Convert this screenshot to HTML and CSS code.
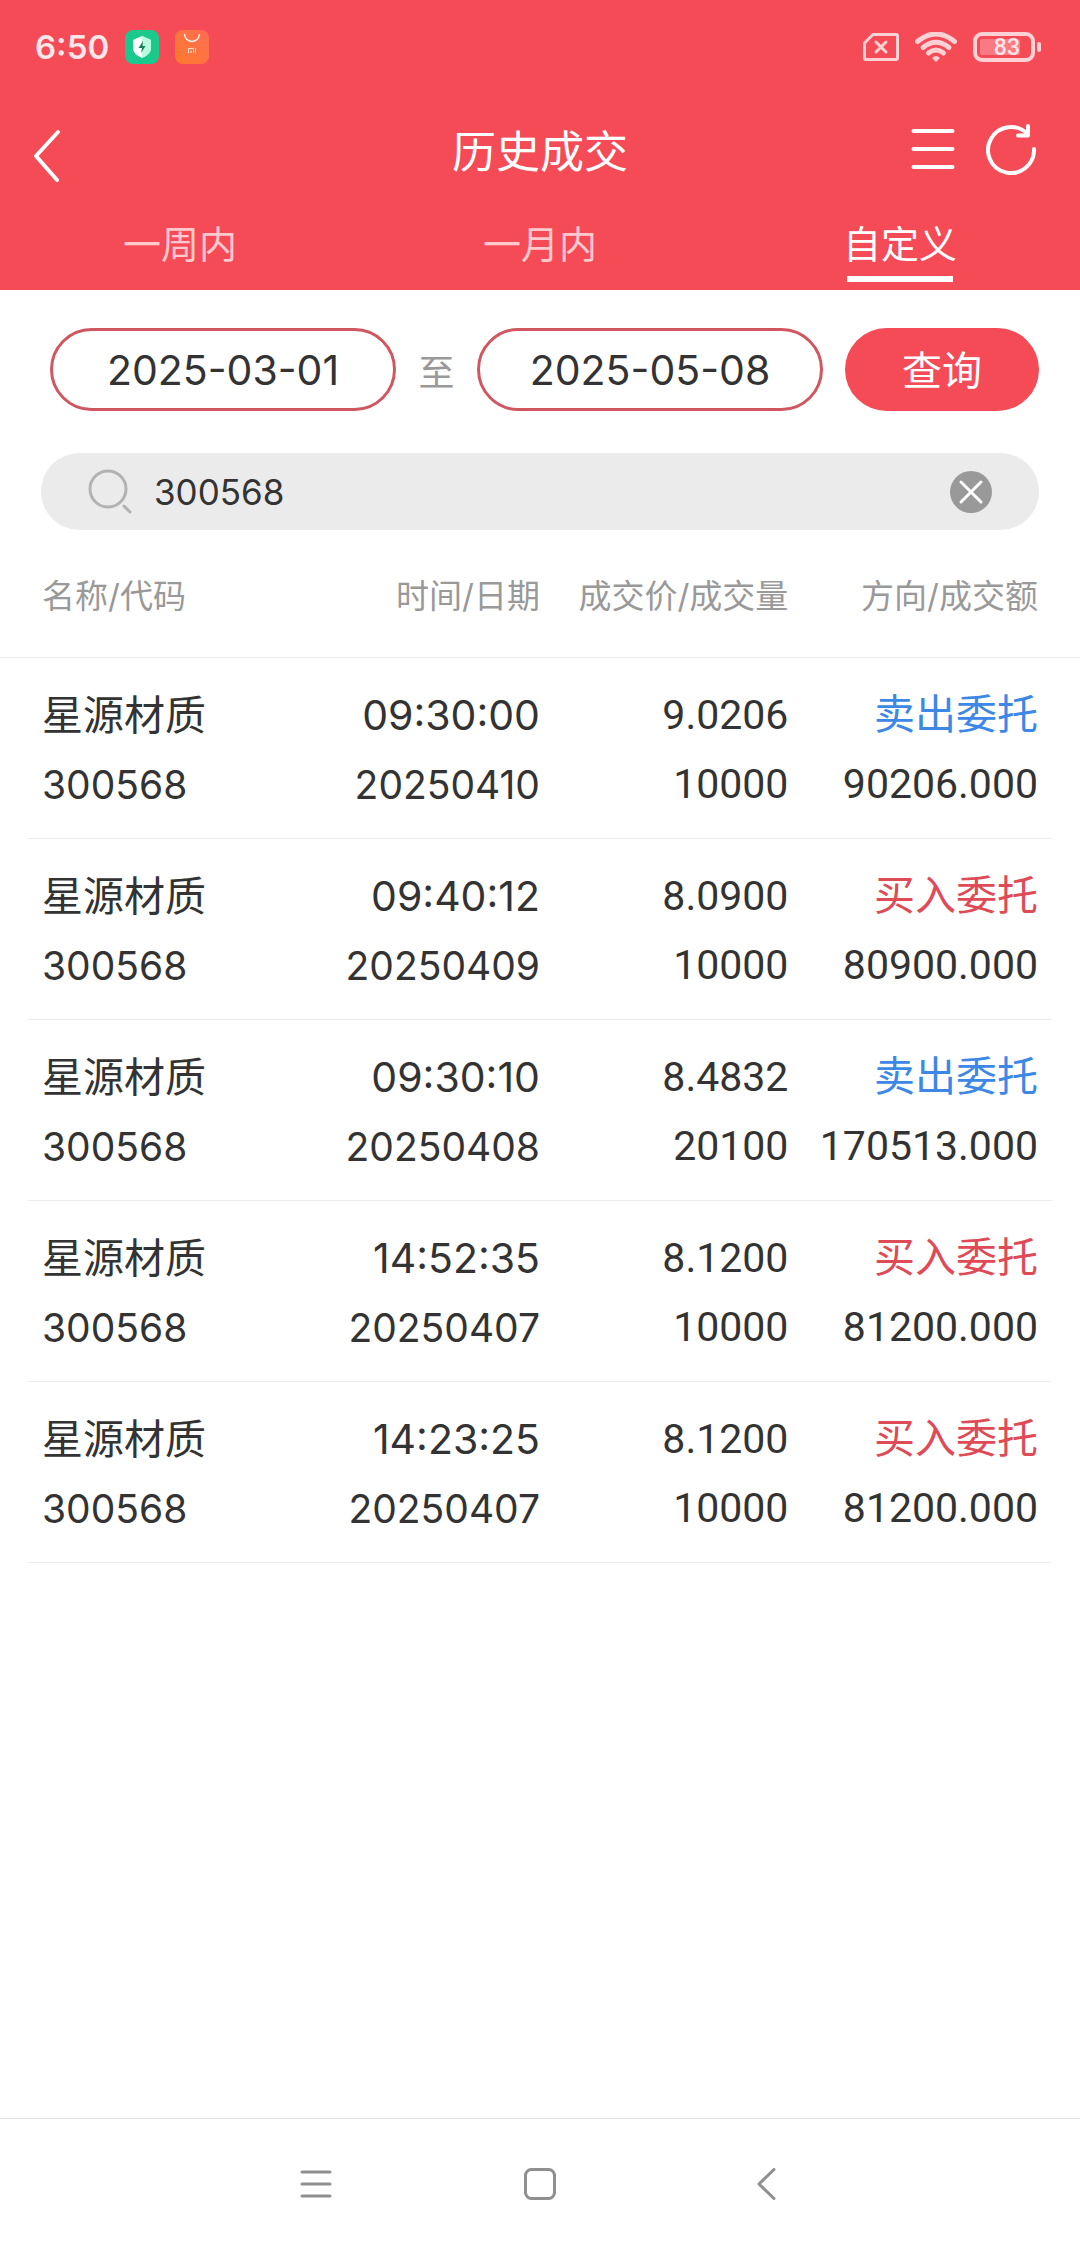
FILE: index.html
```html
<!DOCTYPE html>
<html lang="zh-CN">
<head>
  <meta charset="UTF-8">
  <meta name="viewport" content="width=device-width, initial-scale=1.0">
  <title>历史成交</title>
  <link rel="stylesheet" href="styles.css">
</head>
<body>

<header class="header">
  <div class="status-bar">
    <div class="status-left">
      <span class="clock">6:50</span>
      <svg class="app-icon" viewBox="0 0 34 34">
        <rect width="34" height="34" rx="8" fill="#1cc98c"/>
        <path d="M17 6 L26 10 V18 Q26 24 17 28 Q8 24 8 18 V10 Z" fill="#fff"/>
        <path d="M17 6 L26 10 V18 Q26 24 17 28 Z" fill="#b9fbe0"/>
        <path d="M18 11 L13.500 18 H17 L16 23 L20.500 16 H17.500 Z" fill="#14805a"/>
      </svg>
      <svg class="app-icon" viewBox="0 0 34 34">
        <defs>
          <linearGradient id="store" x1="0" y1="1" x2="1" y2="0">
            <stop offset="0" stop-color="#ff7a2c"/>
            <stop offset="1" stop-color="#ff6d55"/>
          </linearGradient>
        </defs>
        <rect width="34" height="34" rx="8" fill="url(#store)"/>
        <path d="M9.500 4 A7.500 7.500 0 0 0 24.500 4" fill="none" stroke="#fff" stroke-width="1.300"/>
        <path d="M13.500 23 V18.500 H18.500 V23 M16 20.500 V23 M20.500 18 V23" fill="none" stroke="#ffe3d6" stroke-width="1"/>
      </svg>
    </div>
    <div class="status-right">
      <svg class="sim" viewBox="0 0 36 28">
        <path d="M10 1.500 H33 Q34.500 1.500 34.500 3 V25 Q34.500 26.500 33 26.500 H3 Q1.500 26.500 1.500 25 V10 Z"/>
        <path d="M13 9 L23 19 M23 9 L13 19"/>
      </svg>
      <svg class="wifi" viewBox="0 0 42 30">
        <path d="M2.500 9.500 Q21 -5.500 39.500 9.500"/>
        <path d="M8 15.500 Q21 5 34 15.500"/>
        <path d="M13.500 21 Q21 15 28.500 21"/>
        <path class="wifi-dot" d="M17 26 Q21 22 25 26 L21 30 Z"/>
      </svg>
      <div class="battery"><span class="battery-level">83</span></div>
    </div>
  </div>

  <div class="title-bar">
    <button class="icon-btn back" type="button" aria-label="返回">
      <svg width="28" height="54" viewBox="0 0 28 54"><path d="M25 3 L3 27 L24 51"/></svg>
    </button>
    <h1>历史成交</h1>
    <div class="actions">
      <button class="icon-btn" type="button" aria-label="菜单">
        <svg width="44" height="44" viewBox="0 0 44 44"><path d="M2.500 4 H41.500 M2.500 22 H41.500 M2.500 40 H41.500"/></svg>
      </button>
      <button class="icon-btn" type="button" aria-label="刷新">
        <svg width="50" height="52" viewBox="0 0 50 52"><path d="M48 26 A23 23 0 1 1 41.500 11"/><path d="M42 3 V12.500 H32"/></svg>
      </button>
    </div>
  </div>

  <nav class="tabs">
    <button class="tab" type="button">一周内</button>
    <button class="tab" type="button">一月内</button>
    <button class="tab active" type="button">自定义</button>
  </nav>
</header>

<main>
  <form class="filter">
    <div class="dates">
      <input class="date" type="text" value="2025-03-01" aria-label="开始日期">
      <span class="to">至</span>
      <input class="date" type="text" value="2025-05-08" aria-label="结束日期">
      <button class="query" type="button">查询</button>
    </div>
    <div class="search">
      <svg class="search-icon" viewBox="0 0 46 46"><circle cx="20" cy="20" r="18"/><path d="M36 37 L42 43"/></svg>
      <input class="search-input" type="text" value="300568" aria-label="股票代码">
      <button class="clear" type="button" aria-label="清除">
        <svg width="42" height="42" viewBox="0 0 42 42"><circle cx="21" cy="21" r="21"/><path d="M11 11 L31 31 M31 11 L11 31"/></svg>
      </button>
    </div>
  </form>

  <table class="deals">
    <colgroup>
      <col class="col-name">
      <col class="col-time">
      <col class="col-price">
      <col class="col-side">
    </colgroup>
    <thead>
      <tr><th>名称/代码</th><th>时间/日期</th><th>成交价/成交量</th><th>方向/成交额</th></tr>
    </thead>
    <tbody>
      <tr>
        <td><span class="name">星源材质</span><br>300568</td>
        <td><span class="time">09:30:00</span><br>20250410</td>
        <td class="num">9.0206<br>10000</td>
        <td class="num"><span class="sell">卖出委托</span><br>90206.000</td>
      </tr>
      <tr>
        <td><span class="name">星源材质</span><br>300568</td>
        <td><span class="time">09:40:12</span><br>20250409</td>
        <td class="num">8.0900<br>10000</td>
        <td class="num"><span class="buy">买入委托</span><br>80900.000</td>
      </tr>
      <tr>
        <td><span class="name">星源材质</span><br>300568</td>
        <td><span class="time">09:30:10</span><br>20250408</td>
        <td class="num">8.4832<br>20100</td>
        <td class="num"><span class="sell">卖出委托</span><br>170513.000</td>
      </tr>
      <tr>
        <td><span class="name">星源材质</span><br>300568</td>
        <td><span class="time">14:52:35</span><br>20250407</td>
        <td class="num">8.1200<br>10000</td>
        <td class="num"><span class="buy">买入委托</span><br>81200.000</td>
      </tr>
      <tr>
        <td><span class="name">星源材质</span><br>300568</td>
        <td><span class="time">14:23:25</span><br>20250407</td>
        <td class="num">8.1200<br>10000</td>
        <td class="num"><span class="buy">买入委托</span><br>81200.000</td>
      </tr>
    </tbody>
  </table>
</main>

<footer class="sys-nav">
  <button type="button" aria-label="最近任务">
    <svg width="32" height="32" viewBox="0 0 32 32"><path d="M2 4 H30 M2 16 H30 M2 28 H30"/></svg>
  </button>
  <button type="button" aria-label="主页">
    <svg width="32" height="32" viewBox="0 0 32 32"><rect x="1.500" y="1.500" width="29" height="29" rx="6"/></svg>
  </button>
  <button type="button" aria-label="返回">
    <svg width="32" height="32" viewBox="0 0 32 32"><path d="M26 1.500 L11 16 L26 30.500"/></svg>
  </button>
</footer>

</body>
</html>
```
FILE: styles.css
```css
* {
  box-sizing: border-box;
}
body {
  margin: 0;
  min-height: 100vh;
  display: flex;
  flex-direction: column;
  background-color: #fff;
  color: #333;
  font-family: Inter, "Noto Sans CJK SC", sans-serif;
  font-size: 39px;
}
button {
  border: none;
  background: none;
  padding: 0;
  color: inherit;
  font-family: inherit;
  cursor: pointer;
}
input {
  font-family: inherit;
  color: inherit;
  outline: none;
}
svg {
  display: block;
}

/* header */
.header {
  background-color: #f54b57;
  color: #fff;
}
.status-bar {
  display: flex;
  justify-content: space-between;
  align-items: center;
  height: 94px;
  padding: 0 39px 0 35px;
}
.status-left,
.status-right {
  display: flex;
  align-items: center;
  gap: 16px;
}
.clock {
  font-size: 33px;
  font-weight: 600;
  color: #ffe6e8;
}
.app-icon {
  width: 34px;
  height: 34px;
}
.sim {
  width: 36px;
  height: 28px;
}
.wifi {
  width: 42px;
  height: 30px;
}
.sim path,
.wifi path {
  fill: none;
  stroke: #ffd0d4;
  stroke-width: 3;
  stroke-linecap: round;
}
.wifi path {
  stroke-width: 5;
}
.wifi .wifi-dot {
  fill: #ffd0d4;
  stroke: none;
}
.battery {
  position: relative;
  width: 62px;
  height: 30px;
  margin-right: 6px;
  border: 4px solid #ffd0d4;
  border-radius: 9px;
  display: flex;
  padding: 3px;
}
.battery::after {
  content: "";
  position: absolute;
  right: -10px;
  top: 6px;
  width: 4px;
  height: 10px;
  border-radius: 2px;
  background-color: #ffd0d4;
}
.battery-level {
  width: 40px;
  background-color: #f97a83;
  border-radius: 2px;
  font-family: Roboto, sans-serif;
  font-size: 23px;
  line-height: 18px;
  font-weight: 500;
  color: #ffe6e8;
  text-align: right;
}

.title-bar {
  display: grid;
  grid-template-columns: 1fr auto 1fr;
  align-items: center;
  height: 110px;
  padding: 0 44px;
}
.title-bar h1 {
  margin: 0;
  font-size: 44px;
  font-weight: 400;
}
.icon-btn path {
  fill: none;
  stroke: #fff;
  stroke-width: 4;
  stroke-linecap: round;
  stroke-linejoin: round;
}
.back {
  justify-self: start;
  margin-left: -11px;
  padding-top: 14px;
}
.actions {
  display: flex;
  justify-content: flex-end;
  align-items: center;
  gap: 31px;
}

.tabs {
  display: flex;
}
.tab {
  position: relative;
  flex: 1;
  height: 86px;
  padding-bottom: 12px;
  font-size: 38px;
  color: #ffc9cd;
}
.tab.active {
  color: #fff;
}
.tab.active::after {
  content: "";
  position: absolute;
  left: 50%;
  bottom: 8px;
  width: 106px;
  height: 6px;
  margin-left: -53px;
  background-color: #fff;
}

/* filter */
main {
  flex: 1;
}
.filter {
  padding: 38px 41px 0;
}
.dates {
  display: flex;
  align-items: center;
  padding-left: 9px;
}
.date {
  flex: 1;
  min-width: 0;
  height: 83px;
  border: 3px solid #d05660;
  border-radius: 42px;
  background: none;
  text-align: center;
  font-size: 41px;
}
.to {
  width: 81px;
  text-align: center;
  font-size: 36px;
  color: #999;
}
.query {
  width: 194px;
  height: 83px;
  margin-left: 22px;
  padding-bottom: 4px;
  border-radius: 42px;
  background-color: #f54b57;
  color: #fff;
  font-size: 40px;
}
.search {
  display: flex;
  align-items: center;
  height: 77px;
  margin-top: 42px;
  padding: 0 47px;
  border-radius: 39px;
  background-color: #ebebeb;
}
.search-icon {
  width: 46px;
  height: 46px;
  fill: none;
  stroke: #b2b2b2;
  stroke-width: 3;
  stroke-linecap: round;
}
.search-input {
  flex: 1;
  min-width: 0;
  padding: 0 20px;
  border: none;
  background: none;
  font-size: 35px;
}
.clear circle {
  fill: #999;
}
.clear path {
  stroke: #fff;
  stroke-width: 3;
  stroke-linecap: round;
}

/* deals */
.deals {
  width: 100%;
  table-layout: fixed;
  border-collapse: collapse;
  line-height: 69px;
}
.col-name {
  width: 27%;
}
.col-time {
  width: 23%;
}
.col-price {
  width: 23%;
}
.col-side {
  width: 27%;
}
.deals th {
  height: 127px;
  padding: 6px 0 0;
  border-bottom: 1px solid #ebebeb;
  font-size: 33px;
  font-weight: 400;
  color: #999;
  text-align: right;
  white-space: nowrap;
}
.deals td {
  padding: 23px 0 20px;
  text-align: right;
  white-space: nowrap;
}
.deals tbody tr {
  background: linear-gradient(#ebebeb, #ebebeb) center bottom / calc(100% - 56px) 1px no-repeat;
}
.deals th:first-child,
.deals td:first-child {
  padding-left: 42px;
  text-align: left;
}
.deals th:last-child,
.deals td:last-child {
  padding-right: 42px;
}
.deals .num {
  font-family: Roboto, "Noto Sans CJK SC", sans-serif;
  font-size: 41px;
}
.name,
.time {
  font-size: 41px;
  line-height: 1;
}
.sell {
  color: #3d87e6;
}
.buy {
  color: #de4b57;
}

/* system navigation */
.sys-nav {
  display: flex;
  height: 130px;
  padding: 0 204px;
  border-top: 1px solid #e3e3e3;
}
.sys-nav button {
  flex: 1;
  display: flex;
  justify-content: center;
  align-items: center;
}
.sys-nav svg {
  fill: none;
  stroke: #8f8f8f;
  stroke-width: 3;
  stroke-linecap: round;
  stroke-linejoin: round;
}
```
